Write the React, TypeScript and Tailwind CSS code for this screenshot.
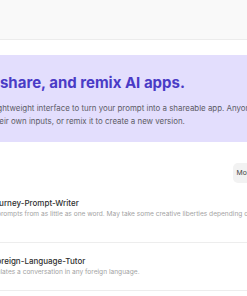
import React from 'react';

const apps = [
  {
    name: 'Midjourney-Prompt-Writer',
    desc: 'Generates prompts from as little as one word. May take some creative liberties depending on the input.',
    nameOffset: '-ml-[22px]',
    descOffset: '-ml-[37px]',
    pad: 'pt-0 pb-[23px]',
  },
  {
    name: 'Foreign-Language-Tutor',
    desc: 'Simulates a conversation in any foreign language.',
    nameOffset: '-ml-[8px]',
    descOffset: '-ml-[15px]',
    pad: 'pt-[13px] pb-[13px]',
  },
];

const App = () => {
  return (
    <div className="w-[247px] h-[296px] overflow-hidden bg-white font-['Inter',sans-serif]">
      {/* top bar */}
      <div className="h-[40px] bg-[#f9f9f9] border-b border-[#ececec]" />

      {/* intro banner */}
      <div className="mt-[15px] h-[87px] bg-[#e3defd] pt-[19px] whitespace-nowrap">
        <h1 className="-ml-[45px] text-[15px] leading-[18px] font-bold text-[#4a3bc6]">
          Build, share, and remix AI apps.
        </h1>
        <p className="mt-[10px] text-[7.9px] leading-[13px] text-[#5c5c66]">
          <span className="block -ml-[30px]">
            Use a lightweight interface to turn your prompt into a shareable app. Anyone can
          </span>
          <span className="block -ml-[47px]">run it with their own inputs, or remix it to create a new version.</span>
        </p>
      </div>

      {/* sort row */}
      <div className="mt-[21px] flex justify-end whitespace-nowrap">
        <button className="-mr-[36px] h-[20px] rounded-[5px] bg-[#f2f2f2] px-[4px] text-[6.8px] text-[#444]">
          Most popular
        </button>
      </div>

      {/* app list */}
      <ul className="mt-[15px] whitespace-nowrap">
        {apps.map((a) => (
          <li key={a.name} className={`border-b border-[#ededed] ${a.pad}`}>
            <div className={`${a.nameOffset} text-[8px] leading-[10px] font-medium text-[#2f2f2f]`}>{a.name}</div>
            <div className={`${a.descOffset} mt-[2px] text-[6.6px] leading-[9px] text-[#a3a3a3]`}>{a.desc}</div>
          </li>
        ))}
      </ul>
    </div>
  );
};

export default App;
